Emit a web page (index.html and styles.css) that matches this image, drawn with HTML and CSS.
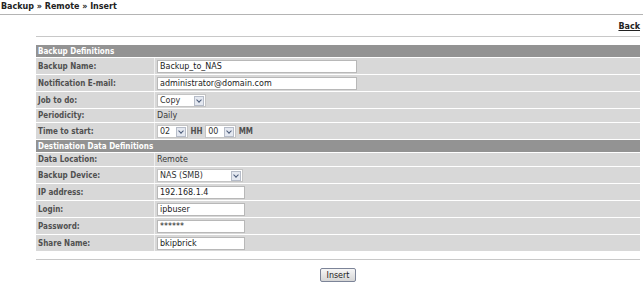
FILE: index.html
```html
<!DOCTYPE html>
<html lang="en">
    <head>
        <title>Backup - Insert</title>
        <link rel="stylesheet" href="styles.css">
    </head>
    <body>
        <div class="crumb">Backup &raquo; Remote &raquo; Insert</div>

        <div class="content">
            <div class="toplinks"><a href="#">Back</a></div>
            <div class="rule"></div>

            <form>
            <table class="form-table">
                <tr><th colspan="2">Backup Definitions</th></tr>
                <tr>
                    <td class="label">Backup Name:</td>
                    <td><input type="text" class="wide" value="Backup_to_NAS"></td>
                </tr>
                <tr>
                    <td class="label">Notification E-mail:</td>
                    <td><input type="text" class="wide" value="administrator@domain.com"></td>
                </tr>
                <tr>
                    <td class="label">Job to do:</td>
                    <td>
                        <span class="pick job"><select><option>Copy</option></select><span class="arrow"></span></span>
                    </td>
                </tr>
                <tr class="plain">
                    <td class="label">Periodicity:</td>
                    <td>Daily</td>
                </tr>
                <tr>
                    <td class="label">Time to start:</td>
                    <td>
                        <span class="pick time"><select><option>02</option></select><span class="arrow"></span></span>
                        <span class="unit">HH</span>
                        <span class="pick time"><select><option>00</option></select><span class="arrow"></span></span>
                        <span class="unit">MM</span>
                    </td>
                </tr>
                <tr><th colspan="2">Destination Data Definitions</th></tr>
                <tr class="plain">
                    <td class="label">Data Location:</td>
                    <td>Remote</td>
                </tr>
                <tr>
                    <td class="label">Backup Device:</td>
                    <td>
                        <span class="pick device"><select><option>NAS (SMB)</option></select><span class="arrow"></span></span>
                    </td>
                </tr>
                <tr>
                    <td class="label">IP address:</td>
                    <td><input type="text" class="short" value="192.168.1.4"></td>
                </tr>
                <tr>
                    <td class="label">Login:</td>
                    <td><input type="text" class="short" value="ipbuser"></td>
                </tr>
                <tr>
                    <td class="label">Password:</td>
                    <td><input type="text" class="short" value="******"></td>
                </tr>
                <tr>
                    <td class="label">Share Name:</td>
                    <td><input type="text" class="short" value="bkipbrick"></td>
                </tr>
            </table>

            <div class="rule bottom"></div>
            <div class="actions"><button type="button">Insert</button></div>
            </form>
        </div>
    </body>
</html>
```

FILE: styles.css
```css
body{
    margin: 0;
    background-color: #ffffff;
    font-family: "DejaVu Sans", Verdana, sans-serif;
    font-size: 8px;
    color: #333333;
}
.crumb{
    font-weight: bold;
    font-size: 8px;
    padding: 2px 0 0 1px;
    height: 12px;
    border-bottom: 1px solid #b4b4b4;
    color: #222222;
}
.content{
    padding: 0 3px 0 36px;
}
.toplinks{
    text-align: right;
    padding-top: 7px;
    height: 14px;
}
.toplinks a{
    color: #222222;
    font-weight: bold;
    text-decoration: underline;
}
.rule{
    border-top: 1px solid #c8c8c8;
    margin-bottom: 7px;
}
.rule.bottom{
    margin-top: 7px;
    margin-bottom: 8px;
}
.form-table{
    width: 100%;
    border-collapse: separate;
    border-spacing: 0 1px;
}
.form-table th{
    background-color: #939393;
    color: #ffffff;
    text-align: left;
    font-family: "DejaVu Sans Condensed", "DejaVu Sans", sans-serif;
    font-size: 8px;
    height: 12px;
    padding: 0 2px;
}
.form-table td{
    background-color: #d8d8d8;
    height: 16px;
    padding: 0 2px;
    color: #3a3a3a;
}
.form-table tr.plain td{
    height: 13px;
}
.form-table td.label{
    width: 114px;
    font-family: "DejaVu Sans Condensed", "DejaVu Sans", sans-serif;
    font-weight: bold;
    color: #505050;
    border-right: 1px solid #f0f0f0;
}
input{
    font-family: "DejaVu Sans", Verdana, sans-serif;
    font-size: 8px;
    height: 13px;
    box-sizing: border-box;
    border: 1px solid #b8b8b8;
    padding: 0 2px;
    margin: 0;
    color: #222222;
    vertical-align: middle;
}
input.wide{
    width: 200px;
}
input.short{
    width: 88px;
}
.pick{
    position: relative;
    display: inline-block;
    vertical-align: middle;
}
.pick select{
    appearance: none;
    font-family: "DejaVu Sans", Verdana, sans-serif;
    font-size: 8px;
    height: 13px;
    box-sizing: border-box;
    border: 1px solid #c4c4c4;
    background-color: #ffffff;
    padding: 0 2px;
    margin: 0;
    color: #333333;
    width: 100%;
}
.pick.job{
    width: 49px;
}
.pick.time{
    width: 31px;
}
.pick.device{
    width: 86px;
}
.arrow{
    position: absolute;
    right: 2px;
    top: 2px;
    width: 8px;
    height: 8px;
    border: 1px solid #b6bcc8;
    background-color: #e4e8f0;
}
.arrow::after{
    content: "";
    position: absolute;
    left: 2px;
    top: 1px;
    width: 3px;
    height: 3px;
    border-right: 1px solid #4a5a78;
    border-bottom: 1px solid #4a5a78;
    transform: rotate(45deg);
}
.unit{
    font-family: "DejaVu Sans Condensed", "DejaVu Sans", sans-serif;
    font-weight: bold;
    color: #505050;
    vertical-align: middle;
}
.actions{
    text-align: center;
}
.actions button{
    font-family: "DejaVu Sans", Verdana, sans-serif;
    font-size: 8px;
    height: 14px;
    padding: 0 6px;
    border: 1px solid #7c8498;
    border-radius: 2px;
    background: linear-gradient(#f6f6f6, #d6d6d6);
    color: #222222;
}
```
